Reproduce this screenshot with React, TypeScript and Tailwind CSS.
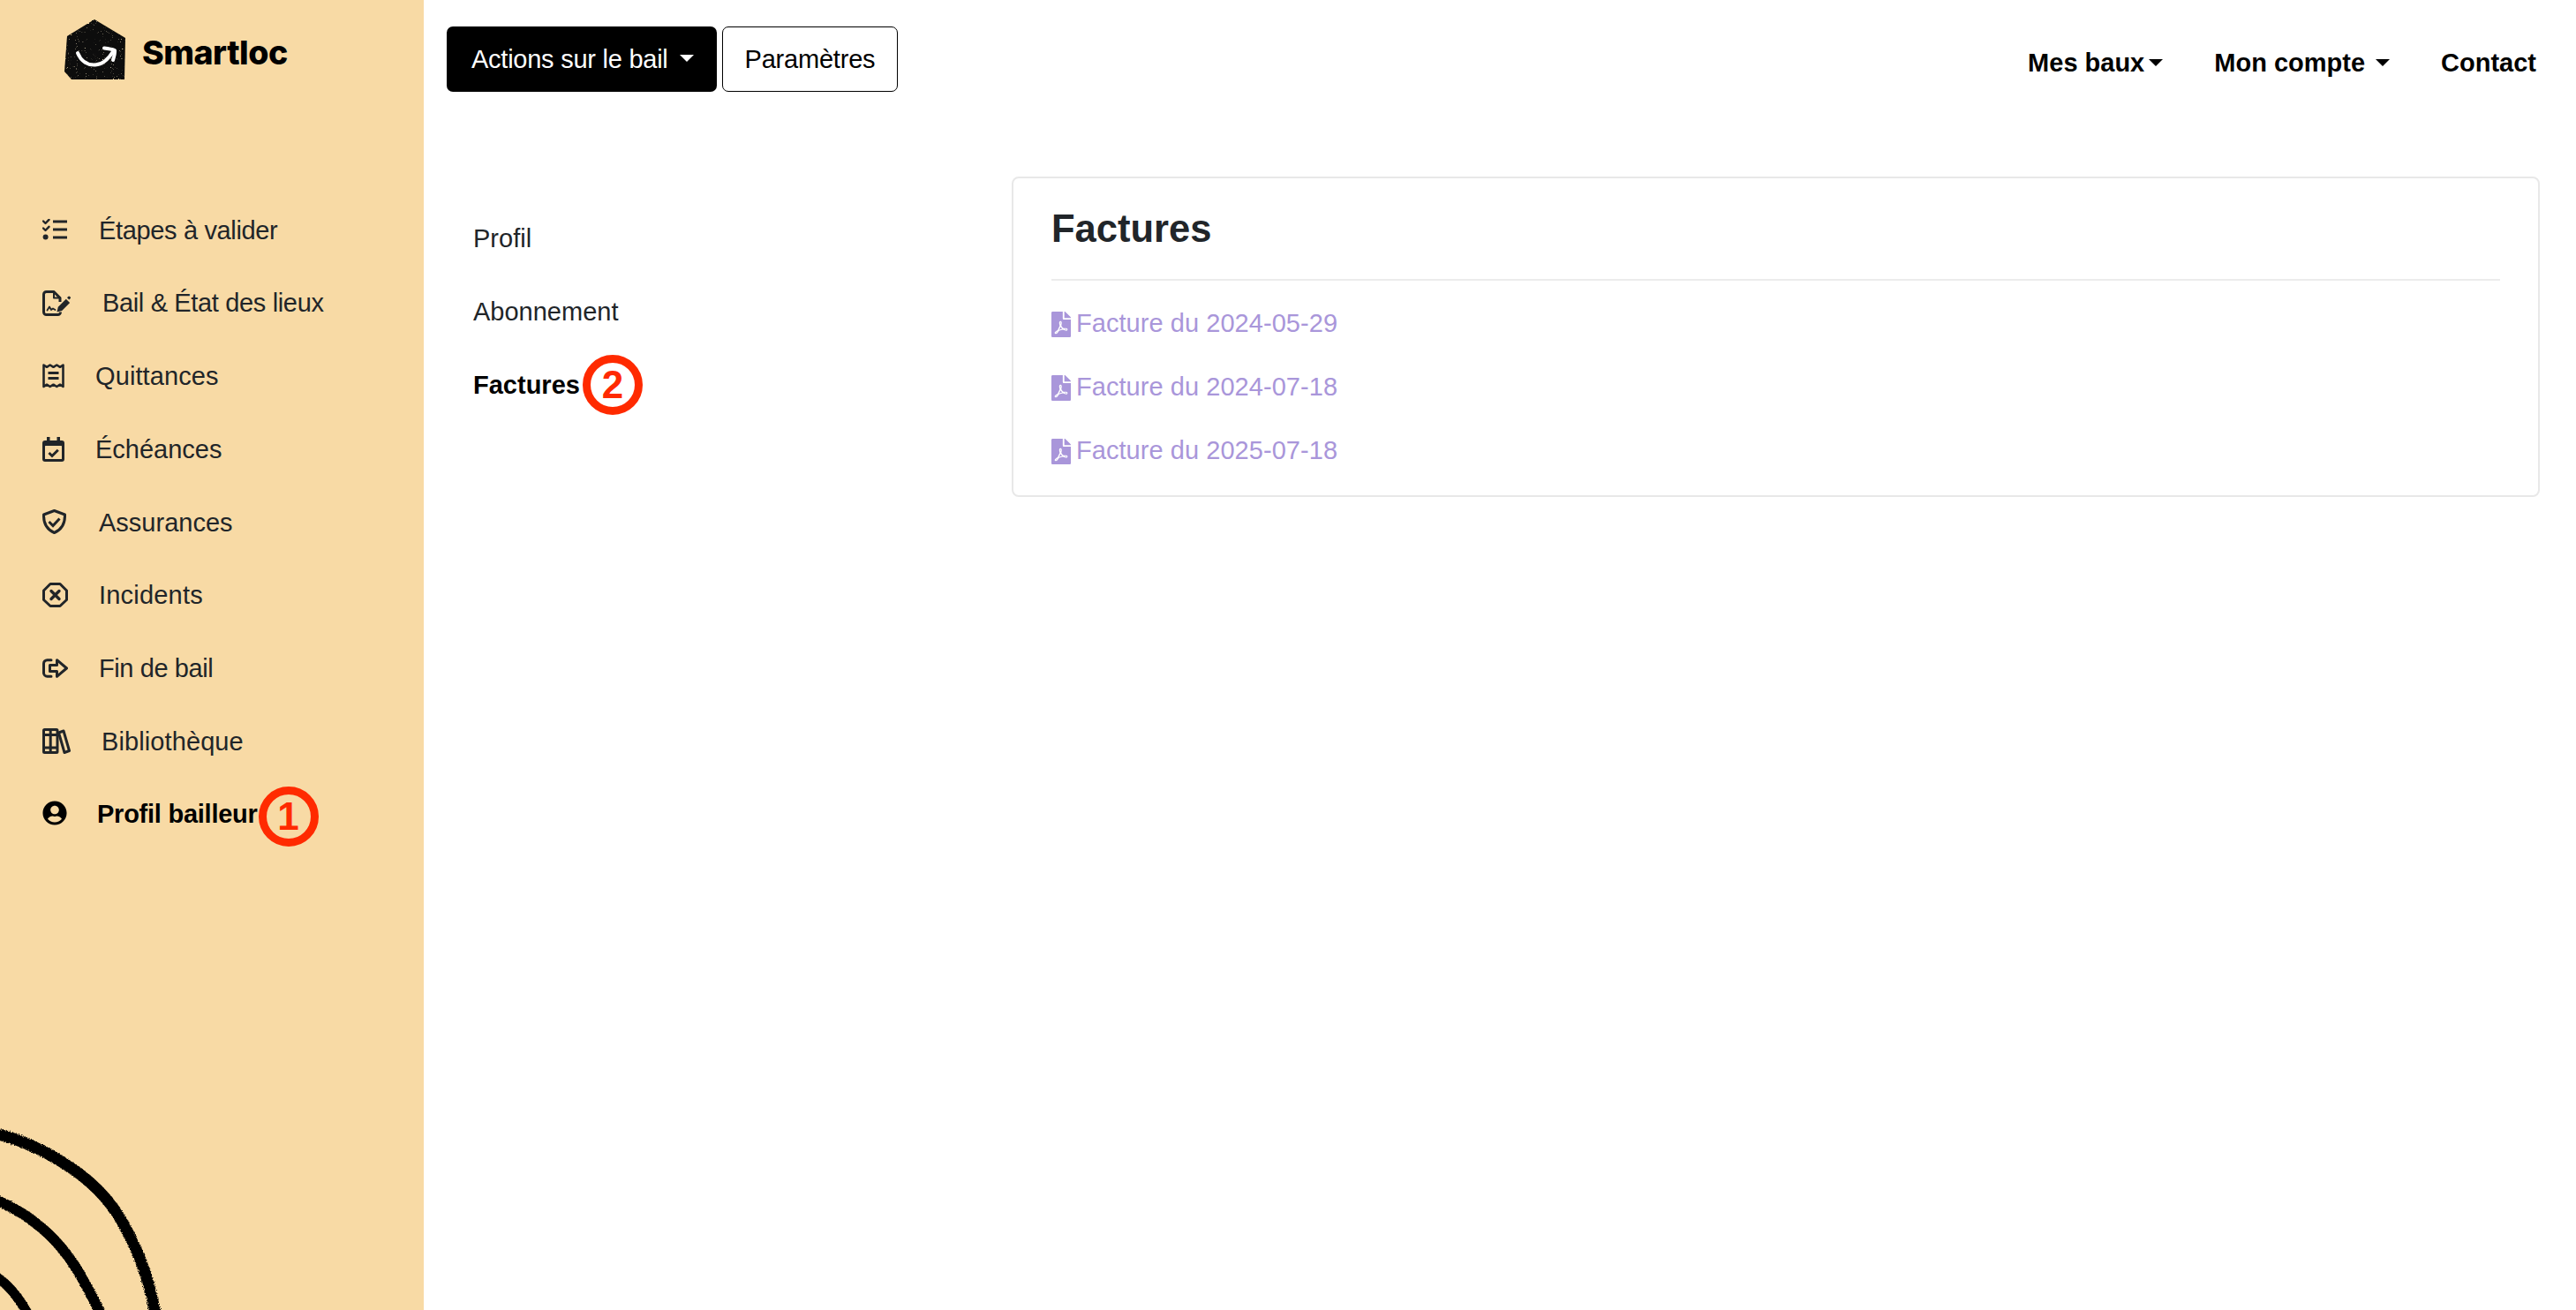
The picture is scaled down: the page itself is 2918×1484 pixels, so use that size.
import React from "react";
import { FaFilePdf, FaUserCircle } from "react-icons/fa";

const S = { fill: "none", stroke: "#212529", strokeWidth: 3, strokeLinecap: "round" as const, strokeLinejoin: "round" as const };

const IconList = () => (
  <svg width="29" height="24" viewBox="0 0 29 24">
    <path d="M1 2.500l2.500 2.500 4-4.200M1 10.500l2.500 2.500 4-4.200" {...S} strokeWidth={2.4} />
    <circle cx="3.600" cy="20.500" r="3" fill="#212529" />
    <path d="M12 3h16M12 12h16M12 21h16" {...S} strokeLinecap="butt" />
  </svg>
);
const IconBail = () => (
  <svg width="32" height="29" viewBox="0 0 32 29">
    <path d="M20 13V8.500L13 1.500H4.500a3 3 0 0 0-3 3v20a3 3 0 0 0 3 3h13a3 3 0 0 0 3-3" {...S} strokeLinecap="butt" />
    <path d="M13 1.500V8.500H20" {...S} strokeWidth={2} />
    <path d="M5.500 22.500l2.500-4 2 3.500 2-1.500 2.500 1.500" {...S} strokeWidth={1.8} />
    <path d="M16.500 24.500l1.300-5.800 9-9 4.300 4.300-9 9Z" fill="#212529" />
    <path d="M28 8.200l1.200-1.200a1.400 1.400 0 0 1 2 0l.3.3a1.400 1.400 0 0 1 0 2L30.300 10.500Z" fill="#212529" />
  </svg>
);
const IconQuitt = () => (
  <svg width="25" height="29" viewBox="0 0 25 29">
    <path d="M1.500 27V2.500l3.500 2.300 3.700-2.300 3.800 2.300 3.800-2.300 3.700 2.300 3.500-2.300V27l-3.500-2.300-3.700 2.300-3.800-2.300-3.800 2.300L5 24.700Z" {...S} strokeWidth={2.6} />
    <path d="M6.500 11.500h12M6.500 17.500h12" {...S} strokeLinecap="butt" />
  </svg>
);
const IconCal = () => (
  <svg width="25" height="28" viewBox="0 0 25 28">
    <path d="M5 0h3.500v4H16.500V0H20v4h2a3 3 0 0 1 3 3v18a3 3 0 0 1-3 3H3a3 3 0 0 1-3-3V7a3 3 0 0 1 3-3h2Z" fill="#212529" />
    <rect x="3" y="10" width="19" height="15" rx="0.500" fill="#f8daa5" />
    <path d="M7.500 18l3.500 3.500 6.800-6.800" {...S} strokeLinecap="butt" strokeLinejoin="miter" />
  </svg>
);
const IconShield = () => (
  <svg width="27" height="28" viewBox="0 0 27 28">
    <path d="M13.500 1.500L25.500 6c.3 9.500-3.500 17-12 20.500C5 23 1.200 15.500 1.500 6Z" {...S} />
    <path d="M7.500 14l4.500 4.500 7.500-8" {...S} strokeLinecap="butt" strokeLinejoin="miter" />
  </svg>
);
const IconOct = () => (
  <svg width="29" height="28" viewBox="0 0 29 28">
    <path d="M9 1.500H20L27.500 9V19.500L20 26.500H9L1.500 19.500V9Z" {...S} />
    <path d="M10 9.500l9 9M19 9.500l-9 9" {...S} strokeWidth={3.4} />
  </svg>
);
const IconFin = () => (
  <svg width="29" height="22" viewBox="0 0 29 22">
    <path d="M10 1.700H5.500a4 4 0 0 0-4 4v10.500a4 4 0 0 0 4 4H10" {...S} />
    <path d="M8.500 7.500H16.500V1.700L27.500 11 16.500 20.300V14.500H8.500Z" {...S} />
  </svg>
);
const IconBooks = () => (
  <svg width="32" height="29" viewBox="0 0 32 29">
    <rect x="1.500" y="1.500" width="15.500" height="26" rx="1" {...S} strokeLinecap="butt" />
    <path d="M9.200 1.500V27.500M1.500 7.500H17M1.500 22H17" {...S} strokeLinecap="butt" />
    <path d="M18.500 5l5.500-2 6.500 22.500-5.500 2Z" {...S} />
  </svg>
);

const Logo = () => (
  <svg width="70" height="69" viewBox="0 0 70 69" className="shrink-0">
    <defs>
      <filter id="rough" x="-5%" y="-5%" width="110%" height="110%">
        <feTurbulence type="fractalNoise" baseFrequency="0.7" numOctaves="2" seed="3" result="n" />
        <feDisplacementMap in="SourceGraphic" in2="n" scale="2" />
      </filter>
      <filter id="speck" x="0" y="0" width="100%" height="100%">
        <feTurbulence type="fractalNoise" baseFrequency="1.100" numOctaves="1" seed="8" />
        <feColorMatrix values="0 0 0 0 0.75  0 0 0 0 0.65  0 0 0 0 0.45  0 0 0 7 -4.700" />
      </filter>
      <clipPath id="houseClip">
        <path d="M3 19L34 0 69 21 68 68 8 68 0 59Z" />
      </clipPath>
    </defs>
    <path d="M3 19L34 0 69 21 68 68 8 68 0 59Z" fill="#0b0a08" filter="url(#rough)" />
    <g clipPath="url(#houseClip)">
      <rect width="70" height="69" filter="url(#speck)" />
    </g>
    <path d="M15 38c4 10 12 14 20 13.500 9-.5 15-7 20-15" fill="none" stroke="#fff" strokeWidth="4" strokeLinecap="round" />
    <path d="M45 32.500c4 .5 8 1 12 2.500 .3 3.500-1 8-2 11" fill="none" stroke="#fff" strokeWidth="4" strokeLinecap="round" strokeLinejoin="round" />
  </svg>
);

const Arcs = () => (
  <svg width="200" height="210" viewBox="0 0 200 210" className="absolute bottom-0 left-0">
    <defs>
      <filter id="brush" x="-5%" y="-5%" width="110%" height="110%">
        <feTurbulence type="fractalNoise" baseFrequency="0.8" numOctaves="2" seed="5" />
        <feDisplacementMap in="SourceGraphic" scale="7" />
      </filter>
    </defs>
    <g fill="none" stroke="#000" filter="url(#brush)">
      <path d="M-5 10C15 15 43 25 68 41 100 60 125 85 140 113 158 145 170 180 176 215" strokeWidth="13" />
      <path d="M-5 85C10 92 27 100 42 113 62 128 78 148 92 172 100 187 108 200 114 215" strokeWidth="12" />
      <path d="M-5 172C5 178 18 190 32 215" strokeWidth="11" />
    </g>
  </svg>
);

const items: { label: string; icon: React.ReactNode; w: string; t: string }[] = [
  { label: "Étapes à valider", icon: <IconList />, w: "w-[64px]", t: "tracking-[-0.35px]" },
  { label: "Bail & État des lieux", icon: <IconBail />, w: "w-[68px]", t: "tracking-[-0.35px]" },
  { label: "Quittances", icon: <IconQuitt />, w: "w-[60px]", t: "tracking-[0.1px]" },
  { label: "Échéances", icon: <IconCal />, w: "w-[60px]", t: "tracking-[0px]" },
  { label: "Assurances", icon: <IconShield />, w: "w-[64px]", t: "tracking-[0px]" },
  { label: "Incidents", icon: <IconOct />, w: "w-[64px]", t: "tracking-[0.2px]" },
  { label: "Fin de bail", icon: <IconFin />, w: "w-[64px]", t: "tracking-[-0.4px]" },
  { label: "Bibliothèque", icon: <IconBooks />, w: "w-[67px]", t: "tracking-[0.1px]" },
];

const Badge = ({ n, m }: { n: string; m: string }) => (
  <span className={`flex h-[68px] w-[68px] shrink-0 items-center justify-center rounded-full border-[9px] border-[#ff2a00] text-[44px] font-bold leading-none text-[#ff2a00] ${m}`}>
    {n}
  </span>
);

const Caret = ({ c }: { c: string }) => (
  <span className={`inline-block h-0 w-0 border-x-[8px] border-t-[8px] border-x-transparent ${c}`} />
);

const factures = ["Facture du 2024-05-29", "Facture du 2024-07-18", "Facture du 2025-07-18"];

export default function App() {
  return (
    <div className="flex h-[1484px] w-[2918px] overflow-hidden bg-white font-['Liberation_Sans',sans-serif] text-[29px] text-[#212529]">
      <aside className="relative h-full w-[480px] shrink-0 overflow-hidden bg-[#f8daa5]">
        <div className="flex items-center gap-[18px] pl-[73px] pt-[22px]">
          <Logo />
          <span className="pt-[6px] font-['Inter',sans-serif] text-[37.500px] font-extrabold leading-none tracking-[-0.5px] text-black">Smartloc</span>
        </div>
        <nav className="mt-[129px] flex flex-col pl-[48px]">
          {items.map((it) => (
            <div key={it.label} className="flex h-[82.750px] items-center">
              <span className={`-mt-[2px] flex shrink-0 items-center ${it.w}`}>{it.icon}</span>
              <span className={it.t}>{it.label}</span>
            </div>
          ))}
          <div className="-mt-[1px] flex h-[82.750px] items-center">
            <span className="-mt-[2px] flex w-[62px] shrink-0 items-center">
              <FaUserCircle size={28} color="#000" />
            </span>
            <span className="font-bold tracking-[-0.25px] text-black">Profil bailleur</span>
            <Badge n="1" m="ml-[1px] mt-[6px]" />
          </div>
        </nav>
        <Arcs />
      </aside>

      <main className="flex min-w-0 flex-1 flex-col">
        <header className="mt-[30px] flex h-[74px] items-center justify-between pl-[26px] pr-[45px]">
          <div className="flex h-full gap-[6px]">
            <button className="flex items-center gap-[13px] rounded-[7px] bg-black pb-0 pl-[28px] pr-[26px] pt-[2px] tracking-[-0.25px] text-white">
              Actions sur le bail
              <Caret c="border-t-white mb-[5px]" />
            </button>
            <button className="flex items-center rounded-[7px] border-[1.500px] border-black px-[25px] pt-[2px] tracking-[-0.2px] text-black">Paramètres</button>
          </div>
          <div className="mt-[10px] flex items-center font-bold text-black">
            <span>Mes baux</span>
            <Caret c="border-t-black ml-[5px] mr-[58px] mb-[3px]" />
            <span>Mon compte</span>
            <Caret c="border-t-black ml-[12px] mr-[58px] mb-[3px]" />
            <span>Contact</span>
          </div>
        </header>

        <div className="flex items-start pl-[56px] pr-[41px]">
          <div className="mt-[125px] flex w-[610px] shrink-0 flex-col">
            <div className="flex h-[83px] items-center">Profil</div>
            <div className="flex h-[83px] items-center">Abonnement</div>
            <div className="flex h-[83px] items-center font-bold text-black">
              Factures
              <Badge n="2" m="ml-[3px] -mt-[2px]" />
            </div>
          </div>
          <section className="mt-[96px] h-[363px] min-w-0 flex-1 rounded-[8px] border-2 border-[#e8e8e8] px-[43px]">
            <h2 className="mt-[31px] text-[43.500px] font-bold leading-[52px]">Factures</h2>
            <hr className="mt-[31px] border-t-2 border-[#ececec]" />
            <ul className="mt-[13px] flex flex-col">
              {factures.map((f) => (
                <li key={f} className="flex h-[72px] items-center gap-[6px] text-[#a996da]">
                  <FaFilePdf color="#a996da" className="h-[29px] w-[22px] shrink-0" preserveAspectRatio="none" />
                  <span className="tracking-[0.05px]">{f}</span>
                </li>
              ))}
            </ul>
          </section>
        </div>
      </main>
    </div>
  );
}
